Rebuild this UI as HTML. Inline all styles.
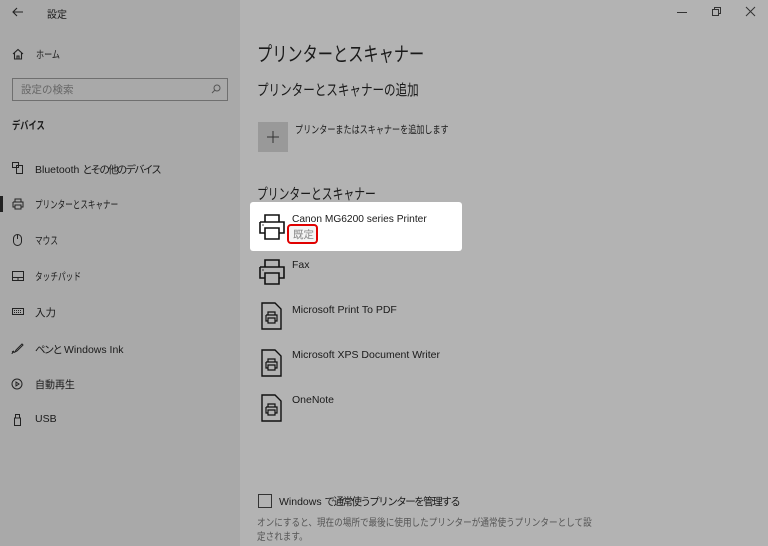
<!DOCTYPE html>
<html><head><meta charset="utf-8"><style>
*{margin:0;padding:0;box-sizing:border-box}
body{width:768px;height:546px;overflow:hidden;font-family:"Liberation Sans","Noto Sans CJK JP",sans-serif;color:#1a1a1a;position:relative;background:#b3b3b3}
.l{position:absolute;left:0;top:0;width:240px;height:546px;background:#a9a9a9}
.a{position:absolute;white-space:nowrap;transform-origin:0 0}
.t{font-size:10.5px}
svg{position:absolute;overflow:visible}
</style></head><body>
<div class="l"></div>
<svg style="left:12px;top:7px" width="12" height="10" viewBox="0 0 12 10"><path d="M11 5H1M5 1L1 5l4 4" fill="none" stroke="#222" stroke-width="1.1"/></svg>
<div class="a" style="left:47px;top:6px;font-size:10px">設定</div>
<svg style="left:12px;top:48px" width="12" height="12" viewBox="0 0 12 12"><path d="M1 6L6 1.5 11 6M2.5 5v6h7V5M5 11V8h2v3" fill="none" stroke="#222" stroke-width="1.1"/></svg>
<div class="a t" style="left:36px;top:47px;transform:scaleX(0.77)">ホーム</div>
<div class="a" style="left:12px;top:78px;width:216px;height:23px;border:1px solid #6f6f6f"></div>
<div class="a" style="left:21px;top:82px;font-size:10.5px;color:#666">設定の検索</div>
<svg style="left:211px;top:84px" width="10" height="10" viewBox="0 0 10 10"><circle cx="6" cy="4" r="3" fill="none" stroke="#555"/><path d="M4 6L1 9" stroke="#555"/></svg>
<div class="a" style="left:12px;top:117px;font-size:11px;font-weight:bold;transform:scaleX(0.75)">デバイス</div>

<svg style="left:12px;top:162px" width="11" height="12" viewBox="0 0 11 12"><rect x="0.5" y="0.5" width="6" height="5" fill="none" stroke="#222"/><rect x="4.5" y="3.5" width="6" height="8" fill="none" stroke="#222"/></svg>
<div class="a t" style="left:35px;top:162px">Bluetooth <span style="letter-spacing:-1.8px">とその他のデバイス</span></div>
<div class="a" style="left:0;top:196px;width:3px;height:16px;background:#222"></div>
<svg style="left:12px;top:198px" width="12" height="12" viewBox="0 0 12 12"><path d="M3 4V1h6v3M1 4h10v5H9M3 9H1V4M3 7h6v4H3z" fill="none" stroke="#222"/></svg>
<div class="a t" style="left:35px;top:197px;transform:scaleX(0.72)">プリンターとスキャナー</div>
<svg style="left:13px;top:234px" width="9" height="12" viewBox="0 0 9 12"><rect x="0.5" y="0.5" width="8" height="11" rx="4" fill="none" stroke="#222"/><path d="M4.5 1v4" stroke="#222"/></svg>
<div class="a t" style="left:35px;top:233px;transform:scaleX(0.73)">マウス</div>
<svg style="left:12px;top:271px" width="12" height="10" viewBox="0 0 12 10"><rect x="0.5" y="0.5" width="11" height="9" fill="none" stroke="#222"/><path d="M1 6.5h10M6 6.5v3" stroke="#222"/></svg>
<div class="a t" style="left:35px;top:269px;transform:scaleX(0.73)">タッチパッド</div>
<svg style="left:12px;top:308px" width="12" height="7" viewBox="0 0 12 7"><rect x="0.5" y="0.5" width="11" height="6" fill="none" stroke="#222"/><path d="M2 2.5h8M2 4.5h8" stroke="#222" stroke-dasharray="1 1"/></svg>
<div class="a t" style="left:35px;top:305px">入力</div>
<svg style="left:11px;top:343px" width="12" height="12" viewBox="0 0 12 12"><path d="M11 1L5 7 4 9 6 8l6-6zM4 9c-2 0-3 1-3 2M3 8l-2 1" fill="none" stroke="#222"/></svg>
<div class="a t" style="left:35px;top:342px"><span style="letter-spacing:-1.8px">ペンと</span> Windows Ink</div>
<svg style="left:11px;top:378px" width="12" height="12" viewBox="0 0 12 12"><circle cx="6" cy="6" r="5" fill="none" stroke="#222"/><path d="M5 4l3 2-3 2z" fill="none" stroke="#222"/></svg>
<div class="a t" style="left:35px;top:377px;transform:scaleX(0.95)">自動再生</div>
<svg style="left:14px;top:414px" width="7" height="12" viewBox="0 0 7 12"><rect x="0.5" y="4" width="6" height="7.5" fill="none" stroke="#222"/><rect x="1.5" y="0.5" width="4" height="3.5" fill="none" stroke="#222"/></svg>
<div class="a t" style="left:35px;top:413px">USB</div>

<div class="a" style="left:677px;top:12px;width:10px;height:1px;background:#333"></div>
<svg style="left:712px;top:7px" width="9" height="9" viewBox="0 0 9 9"><rect x="0.5" y="2.5" width="6" height="6" fill="none" stroke="#333"/><path d="M2.5 2.5V0.5h6v6h-2" fill="none" stroke="#333"/></svg>
<svg style="left:746px;top:7px" width="9" height="9" viewBox="0 0 9 9"><path d="M0 0l9 9M9 0L0 9" stroke="#333"/></svg>

<div class="a" style="left:257px;top:38px;font-size:20px;transform:scaleX(0.76)">プリンターとスキャナー</div>
<div class="a" style="left:257px;top:79px;font-size:15px;transform:scaleX(0.77)">プリンターとスキャナーの追加</div>
<div class="a" style="left:258px;top:122px;width:30px;height:30px;background:#999"></div>
<svg style="left:266px;top:130px" width="14" height="14" viewBox="0 0 14 14"><path d="M7 1v12M1 7h12" stroke="#333"/></svg>
<div class="a" style="left:295px;top:122px;font-size:10.5px;transform:scaleX(0.77)">プリンターまたはスキャナーを追加します</div>
<div class="a" style="left:257px;top:183px;font-size:15px;transform:scaleX(0.72)">プリンターとスキャナー</div>
<div class="a" style="left:250px;top:202px;width:212px;height:49px;background:#fff;border-radius:3px"></div>

<svg style="left:259px;top:214px" width="26" height="26" viewBox="0 0 26 26"><path d="M6 8V1h14v7M1 8h24v11h-5M6 19H1V8M6 14h14v11H6z" fill="none" stroke="#111" stroke-width="1.6"/><path d="M3.5 11h1" stroke="#111" stroke-width="1.6"/></svg>
<div class="a" style="left:292px;top:213px;font-size:10.5px;transform:scaleX(0.97)">Canon MG6200 series Printer</div>
<div class="a" style="left:287px;top:224px;width:31px;height:20px;border:2.5px solid #e00000;border-radius:4px;background:#f4f4f4"></div>
<div class="a" style="left:293px;top:227px;font-size:10.5px;color:#888">既定</div>

<svg style="left:259px;top:259px" width="26" height="26" viewBox="0 0 26 26"><path d="M6 8V1h14v7M1 8h24v11h-5M6 19H1V8M6 14h14v11H6z" fill="none" stroke="#111" stroke-width="1.6"/><path d="M3.5 11h1" stroke="#111" stroke-width="1.6"/></svg>
<div class="a" style="left:292px;top:259px;font-size:10.5px">Fax</div>

<svg style="left:261px;top:302px" width="21" height="28" viewBox="0 0 21 28"><path d="M1 1h13l6 6v20H1z" fill="none" stroke="#111" stroke-width="1.4"/><path d="M7 13v-3h7v3M5 13h11v6h-2M7 19H5v-6M7 16h7v5H7z" fill="none" stroke="#111" stroke-width="1.2"/></svg>
<div class="a" style="left:292px;top:304px;font-size:10.5px">Microsoft Print To PDF</div>
<svg style="left:261px;top:349px" width="21" height="28" viewBox="0 0 21 28"><path d="M1 1h13l6 6v20H1z" fill="none" stroke="#111" stroke-width="1.4"/><path d="M7 13v-3h7v3M5 13h11v6h-2M7 19H5v-6M7 16h7v5H7z" fill="none" stroke="#111" stroke-width="1.2"/></svg>
<div class="a" style="left:292px;top:349px;font-size:10.5px">Microsoft XPS Document Writer</div>
<svg style="left:261px;top:394px" width="21" height="28" viewBox="0 0 21 28"><path d="M1 1h13l6 6v20H1z" fill="none" stroke="#111" stroke-width="1.4"/><path d="M7 13v-3h7v3M5 13h11v6h-2M7 19H5v-6M7 16h7v5H7z" fill="none" stroke="#111" stroke-width="1.2"/></svg>
<div class="a" style="left:292px;top:394px;font-size:10.5px">OneNote</div>

<div class="a" style="left:258px;top:494px;width:14px;height:14px;border:1.5px solid #333"></div>
<div class="a" style="left:279px;top:494px;font-size:10.5px">Windows <span style="letter-spacing:-1.5px">で通常使うプリンターを管理する</span></div>
<div class="a" style="left:257px;top:517px;font-size:10px;color:#555;line-height:14px;transform:scaleX(0.86)">オンにすると、現在の場所で最後に使用したプリンターが通常使うプリンターとして設<br>定されます。</div>
</body></html>
